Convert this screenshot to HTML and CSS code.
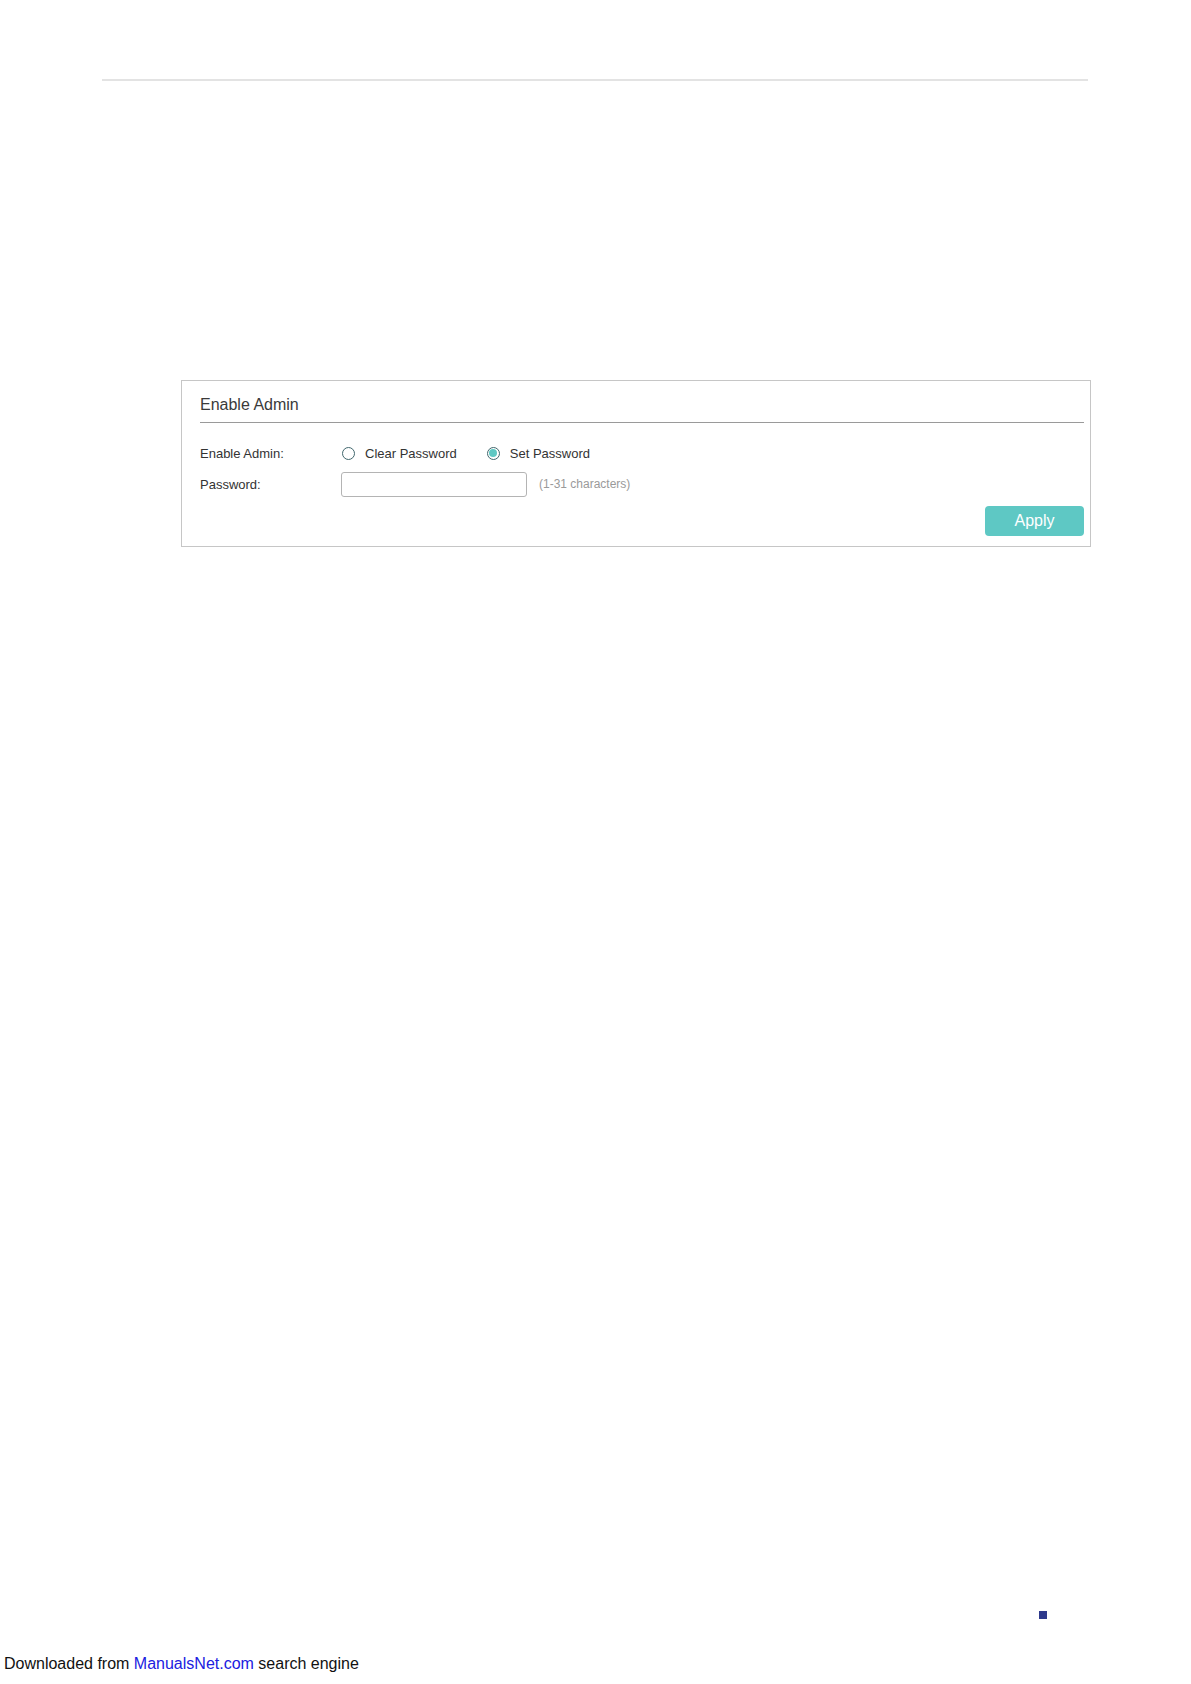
FILE: index.html
```html
<!DOCTYPE html>
<html>

<head>
	<title>Enable Admin</title>
	<link rel="stylesheet" href="styles.css">
</head>

<body>
	<div class="page">
		<!--TOP RULE-->
		<div class="top-rule"></div>

		<!--ENABLE ADMIN PANEL-->
		<section class="panel">
			<h3 class="panel-title">Enable Admin</h3>
			<div class="row">
				<span class="label">Enable Admin:</span>
				<label class="radio">
					<span class="dot"></span>
					<span>Clear Password</span>
				</label>
				<label class="radio checked">
					<span class="dot"></span>
					<span>Set Password</span>
				</label>
			</div>
			<div class="row">
				<span class="label">Password:</span>
				<input class="text-input" type="password">
				<span class="hint">(1-31 characters)</span>
			</div>
			<div class="actions">
				<button class="apply">Apply</button>
			</div>
		</section>

		<!--FOOTER-->
		<div class="page-mark"><span class="square"></span></div>
		<div class="footer">Downloaded from <a href="#">ManualsNet.com</a> search engine</div>
	</div>
</body>

</html>
```

FILE: styles.css
```css
body {
	margin: 0;
	font-family: "Liberation Sans", Arial, sans-serif;
	color: #333;
	background: #fff;
}

.page {
	min-height: 1684px;
	display: flex;
	flex-direction: column;
}

.top-rule {
	height: 2px;
	background-color: #e3e3e3;
	margin: 79px 103px 0 102px;
}

.panel {
	margin: 299px 0 0 181px;
	border: 1px solid #c6c6c6;
	padding: 0 6px 10px 18px;
	box-sizing: content-box;
	width: 884px;
}

.panel-title {
	margin: 0;
	padding: 14px 0 7px;
	font-size: 16px;
	line-height: 20px;
	font-weight: normal;
	color: #3a3a3a;
	border-bottom: 1px solid #9a9a9a;
}

.row {
	display: flex;
	align-items: center;
	height: 26px;
	font-size: 13px;
}

.row:first-of-type {
	margin-top: 17px;
}

.row + .row {
	margin-top: 5px;
}

.label {
	width: 141px;
	flex: none;
}

.radio {
	display: flex;
	align-items: center;
	gap: 10px;
	margin-right: 29px;
	margin-left: 1px;
}

.dot {
	width: 11px;
	height: 11px;
	border: 1.5px solid #41676d;
	border-radius: 50%;
	display: flex;
	align-items: center;
	justify-content: center;
}

.radio.checked .dot::after {
	content: "";
	width: 8px;
	height: 8px;
	border-radius: 50%;
	background-color: #5ec8c3;
}

.text-input {
	width: 184px;
	height: 23px;
	padding: 0;
	border: 1px solid #b4b4b4;
	border-radius: 3px;
	outline: none;
	box-sizing: content-box;
}

.hint {
	margin-left: 12px;
	font-size: 12px;
	color: #9a9a9a;
}

.actions {
	display: flex;
	justify-content: flex-end;
	margin-top: 9px;
}

.apply {
	width: 99px;
	height: 30px;
	border: 0;
	border-radius: 4px;
	background-color: #5ec8c4;
	color: #fff;
	font-family: "Liberation Sans", Arial, sans-serif;
	font-size: 16px;
}

.page-mark {
	margin-top: auto;
	display: flex;
	padding-left: 1039px;
}

.square {
	width: 8px;
	height: 8px;
	background-color: #2e3a8c;
}

.footer {
	margin-top: 35px;
	padding: 0 0 10px 4px;
	font-size: 16px;
	line-height: 20px;
	color: #111;
}

.footer a {
	color: #2020e0;
	text-decoration: none;
}
```
